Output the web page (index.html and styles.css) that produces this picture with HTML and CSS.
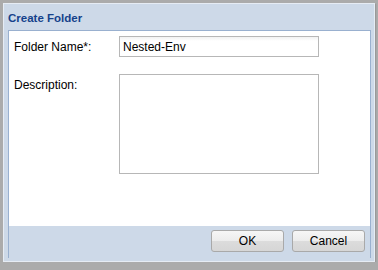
FILE: index.html
```html
<!DOCTYPE html>
<html lang="en">
<head>
    <meta charset="UTF-8">
    <meta name="viewport" content="width=device-width, initial-scale=1.0">
    <title>Create Folder</title>
    <link rel="stylesheet" href="styles.css">
</head>
<body>
    <div class="dialog">
        <div class="dialog-title">Create Folder</div>
        <div class="dialog-frame">
            <div class="dialog-body">
                <div class="form-row">
                    <label class="form-label" for="folderName">Folder Name*:</label>
                    <input type="text" class="form-input" id="folderName" value="Nested-Env">
                </div>
                <div class="form-row">
                    <label class="form-label" for="folderDesc">Description:</label>
                    <textarea class="form-area" id="folderDesc"></textarea>
                </div>
            </div>
            <div class="dialog-footer">
                <button class="dialog-button">OK</button>
                <button class="dialog-button">Cancel</button>
            </div>
        </div>
    </div>
</body>
</html>
```

FILE: styles.css
```css
body {
    margin: 0;
    background-color: #ababab;
    font-family: "Liberation Sans", Arial, sans-serif;
    font-size: 12px;
}
.dialog {
    box-sizing: border-box;
    margin: 3px 0 0 3px;
    width: 372px;
    height: 259px;
    background-color: #cdd9e8;
    border: 1px solid #e6ecf4;
    padding: 0 3px 3px 4px;
    display: flex;
    flex-direction: column;
    box-shadow: 1px 1px 1px #999;
}
.dialog-title {
    height: 26px;
    line-height: 28px;
    font-size: 11.5px;
    font-weight: bold;
    color: #15428b;
}
.dialog-frame {
    flex: 1;
    display: flex;
    flex-direction: column;
    border-left: 1px solid #99b0cf;
    border-right: 1px solid #99b0cf;
}
.dialog-body {
    height: 196px;
    background-color: #fff;
    border-top: 1px solid #99b0cf;
    padding: 5px 5px 0 5px;
    box-sizing: border-box;
    display: flex;
    flex-direction: column;
    gap: 16px;
}
.form-row {
    display: flex;
    align-items: flex-start;
}
.form-label {
    width: 105px;
    flex-shrink: 0;
    color: #000;
    line-height: 22px;
}
.form-input {
    box-sizing: border-box;
    width: 200px;
    height: 21px;
    border: 1px solid #b7b7b7;
    padding: 0 3px;
    font-family: "Liberation Sans", Arial, sans-serif;
    font-size: 12px;
    color: #000;
    background: linear-gradient(#f2f2f2, #fff 4px);
    outline: none;
}
.form-area {
    box-sizing: border-box;
    width: 200px;
    height: 100px;
    border: 1px solid #b7b7b7;
    resize: none;
    background: #fff;
    outline: none;
}
.dialog-footer {
    flex: 1;
    display: flex;
    justify-content: flex-end;
    align-items: flex-start;
    gap: 8px;
    padding: 4px 5px 0 0;
}
.dialog-button {
    box-sizing: border-box;
    width: 73px;
    height: 22px;
    border: 1px solid #a9a9a9;
    border-radius: 3px;
    background: linear-gradient(#f6f6f6 0, #ececec 50%, #dcdcdc 50%, #d6d6d6 100%);
    font-family: "Liberation Sans", Arial, sans-serif;
    font-size: 12px;
    color: #000;
    padding: 0;
    cursor: pointer;
}
```
